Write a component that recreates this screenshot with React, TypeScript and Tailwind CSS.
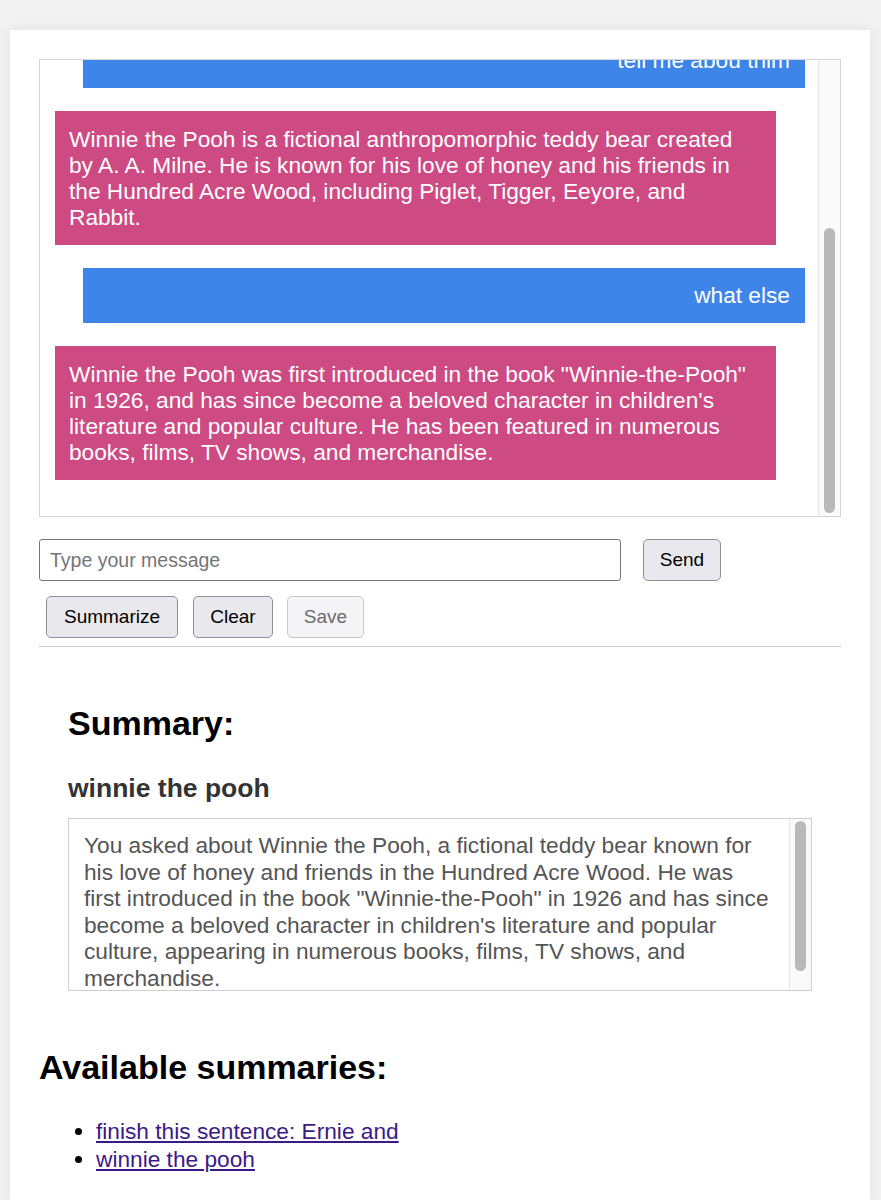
import React from 'react'

const font = { fontFamily: '"Liberation Sans", Arial, Helvetica, sans-serif' }

const messages = [
  { from: 'user', text: 'tell me abou thim' },
  {
    from: 'bot',
    text: 'Winnie the Pooh is a fictional anthropomorphic teddy bear created by A. A. Milne. He is known for his love of honey and his friends in the Hundred Acre Wood, including Piglet, Tigger, Eeyore, and Rabbit.'
  },
  { from: 'user', text: 'what else' },
  {
    from: 'bot',
    text: 'Winnie the Pooh was first introduced in the book "Winnie-the-Pooh" in 1926, and has since become a beloved character in children\'s literature and popular culture. He has been featured in numerous books, films, TV shows, and merchandise.'
  }
]

const summaryText =
  'You asked about Winnie the Pooh, a fictional teddy bear known for his love of honey and friends in the Hundred Acre Wood. He was first introduced in the book "Winnie-the-Pooh" in 1926 and has since become a beloved character in children\'s literature and popular culture, appearing in numerous books, films, TV shows, and merchandise.'

export default function App() {
  return (
    <div className="min-h-[1200px] bg-[#f2f2f2] pt-[30px] pl-[10px] pr-[11px]" style={font}>
      <div className="min-h-[1170px] bg-white px-[29px] pt-[29px] shadow-[0_0_14px_rgba(0,0,0,0.08)]">
        {/* chat log, scrolled to the bottom */}
        <div className="flex h-[458px] border border-[#d4d4d4]">
          <div className="flex flex-1 flex-col justify-end gap-[23px] overflow-hidden pb-[36px] pl-[15px] pr-[13px] text-[22.7px] leading-[26px]">
            {messages.map((m, i) =>
              m.from === 'user' ? (
                <div
                  key={i}
                  className="ml-[28px] shrink-0 bg-[#3d85e8] px-[15px] py-[14px] text-right leading-[27px] text-white"
                >
                  {m.text}
                </div>
              ) : (
                <div key={i} className="mr-[29px] shrink-0 bg-[#cd4a83] px-[14px] py-[15px] text-white">
                  {m.text}
                </div>
              )
            )}
          </div>
          <div className="flex w-[22px] shrink-0 flex-col justify-end border-l border-[#e6e6e6] bg-[#fafafa] px-[5px] pb-[3px]">
            <div className="h-[285px] w-[11px] rounded-full bg-[#b9b9b9]" />
          </div>
        </div>

        {/* input */}
        <div className="mt-[22px] flex items-center gap-[22px]">
          <input
            className="h-[42px] w-[582px] rounded-[3px] border border-[#767676] px-[10px] text-[19.5px] text-black placeholder:text-[#757575]"
            placeholder="Type your message"
            style={font}
          />
          <button className="h-[42px] w-[78px] rounded-[5px] border border-[#8f8f9d] bg-[#e9e9ed] text-[19px] text-black">
            Send
          </button>
        </div>

        <div className="mt-[15px] flex gap-[15px] pl-[7px]">
          <button className="h-[42px] w-[132px] rounded-[5px] border border-[#8f8f9d] bg-[#e9e9ed] text-[19px] text-black">
            Summarize
          </button>
          <button className="h-[42px] w-[80px] rounded-[5px] border border-[#8f8f9d] bg-[#e9e9ed] text-[19px] text-black">
            Clear
          </button>
          <button
            disabled
            className="-ml-px h-[42px] w-[77px] rounded-[5px] border border-[#c7c7cc] bg-[#f4f4f6] text-[19px] text-[#6b6b6b]"
          >
            Save
          </button>
        </div>

        <hr className="mt-[8px] border-t border-[#c8c8c8]" />

        {/* summary */}
        <div className="px-[29px]">
          <h2 className="mt-[56px] text-[34px] font-bold leading-[40px] text-black">Summary:</h2>
          <h3 className="mt-[29px] text-[26.5px] font-bold leading-[32px] text-[#333]">winnie the pooh</h3>
          <div className="mt-[14px] flex h-[173px] border border-[#cfcfcf]">
            <div className="flex-1 overflow-hidden pl-[15px] pr-[17px] pt-[13px] text-[22.7px] leading-[26.6px] text-[#555]">
              {summaryText}
            </div>
            <div className="flex w-[22px] shrink-0 flex-col border-l border-[#e6e6e6] bg-[#fafafa] px-[5px] pt-[2px]">
              <div className="h-[150px] w-[11px] rounded-full bg-[#b9b9b9]" />
            </div>
          </div>
        </div>

        <h2 className="mt-[56px] text-[34px] font-bold leading-[40px] text-black">Available summaries:</h2>
        <ul className="mt-[30px] list-disc pl-[57px] text-[22.7px] leading-[28px] marker:text-black">
          <li>
            <a href="#" className="text-[#3b1a87] underline">
              finish this sentence: Ernie and
            </a>
          </li>
          <li>
            <a href="#" className="text-[#3b1a87] underline">
              winnie the pooh
            </a>
          </li>
        </ul>
      </div>
    </div>
  )
}
